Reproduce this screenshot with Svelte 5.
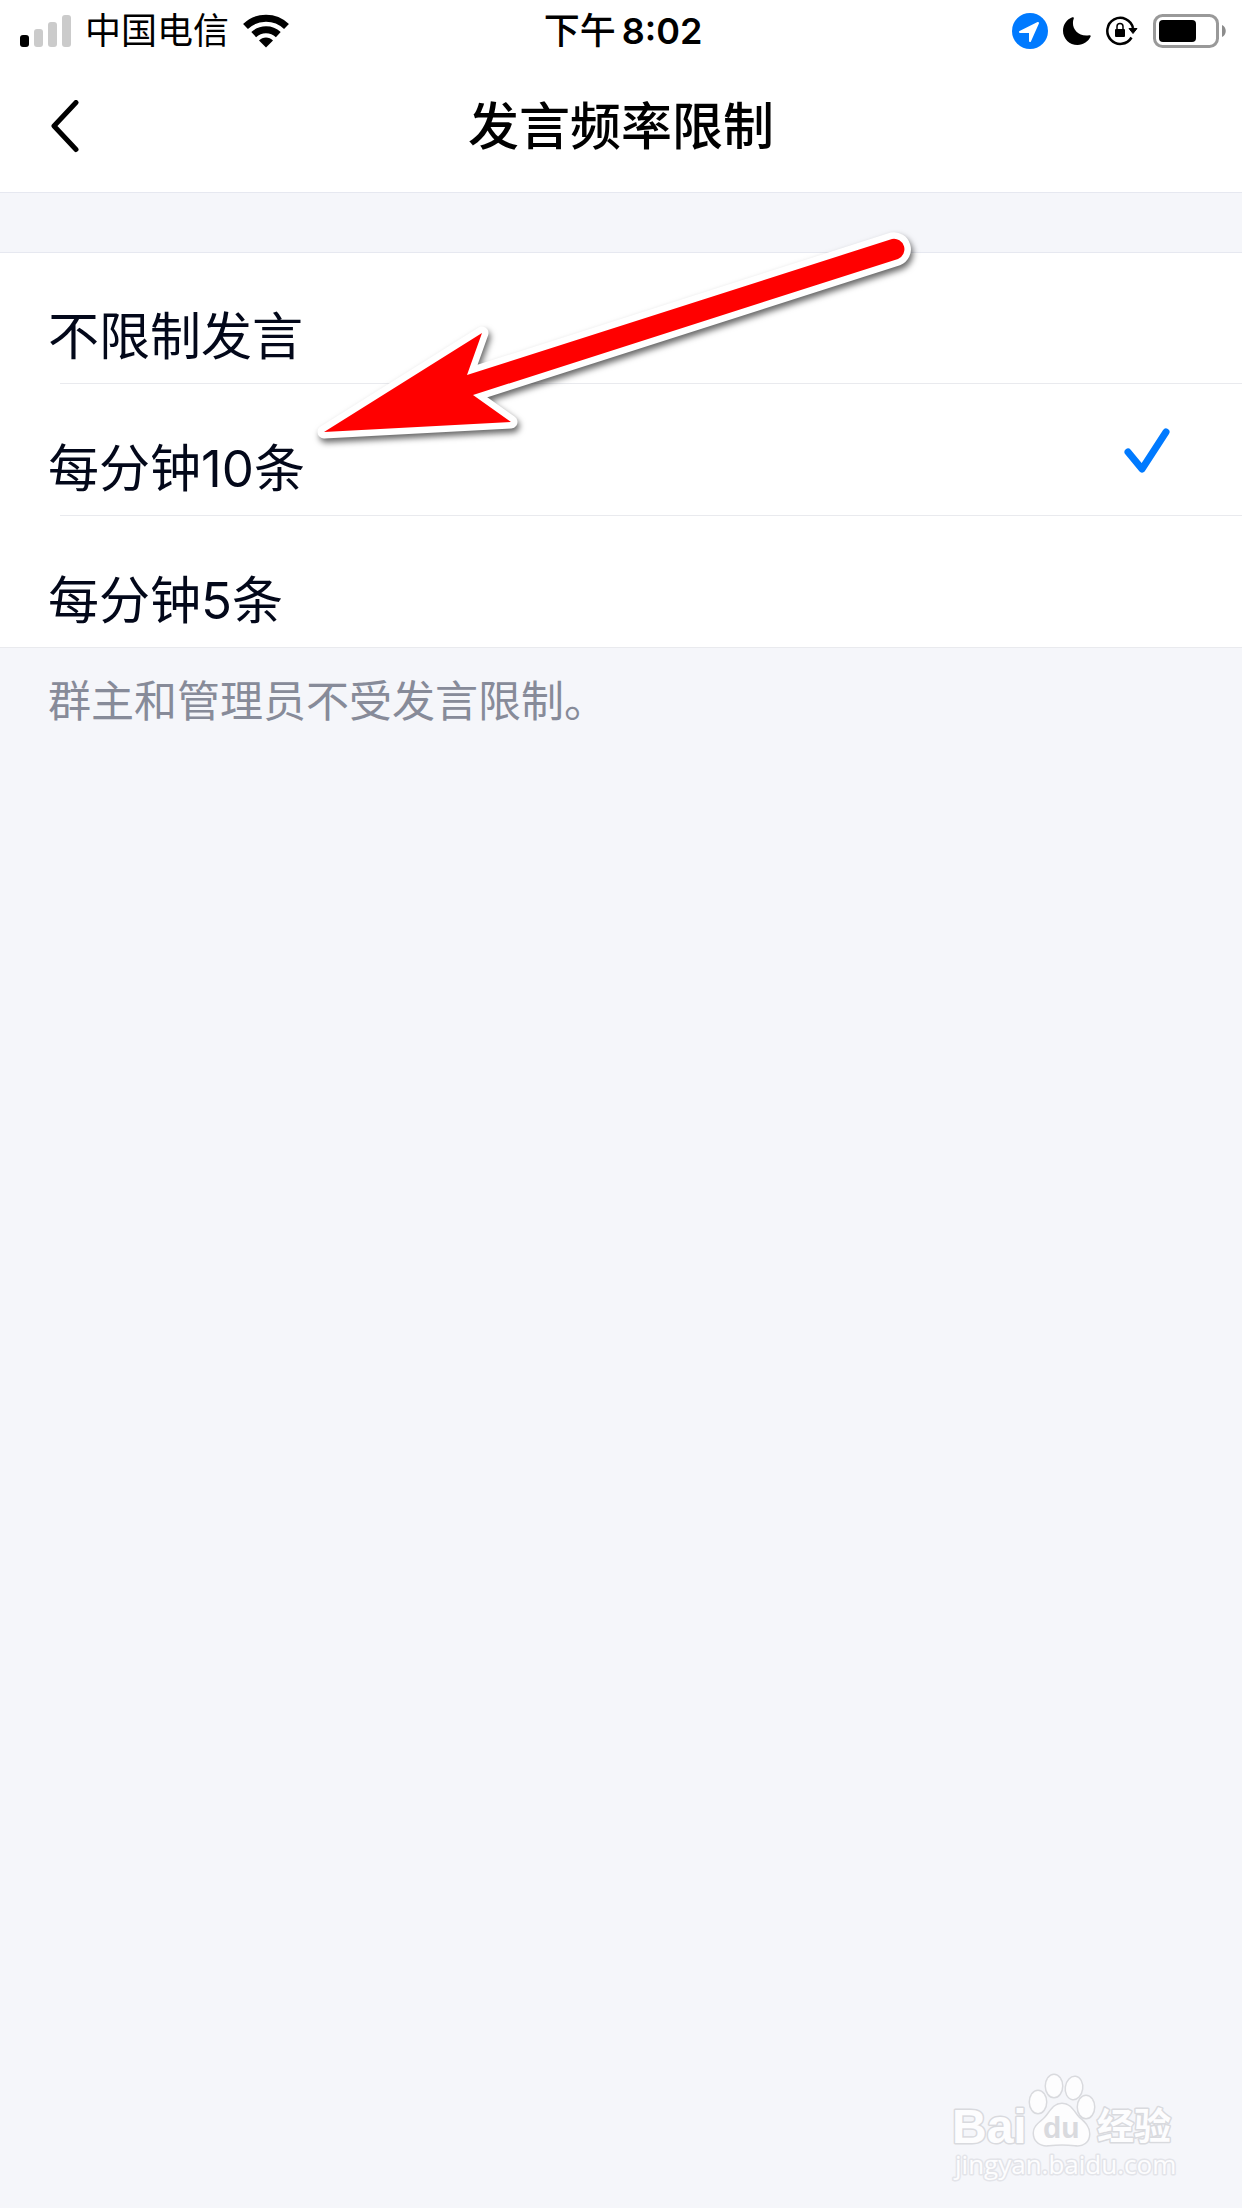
<script lang="ts">
    interface Option {
        value: string;
        label: string;
    }

    const options: Option[] = [
        { value: "unlimited", label: "不限制发言" },
        { value: "ten", label: "每分钟10条" },
        { value: "five", label: "每分钟5条" },
    ];

    let selected = $state("ten");
</script>

<div class="screen">
    <div class="status-bar">
        <div class="status-left">
            <svg class="icon" width="51" height="32" viewBox="0 0 51 32" aria-hidden="true">
                <rect x="0" y="20" width="9" height="12" rx="3" />
                <g fill="#cbcbcb">
                    <rect x="14" y="14" width="9" height="18" rx="3" />
                    <rect x="28" y="7" width="9" height="25" rx="3" />
                    <rect x="42" y="0" width="9" height="32" rx="3" />
                </g>
            </svg>
            <span class="carrier">中国电信</span>
            <svg class="icon" width="46" height="34" viewBox="0 0 46 34" aria-hidden="true">
                <g fill="none" stroke="#000" stroke-width="7">
                    <path d="M2.5 12.5a29.5 29.5 0 0 1 41 0" />
                    <path d="M10.7 20.6a18 18 0 0 1 24.6 0" />
                </g>
                <path d="M23 33.5l-7-7c3.8-4 10.2-4 14 0z" />
            </svg>
        </div>
        <div class="time">
            <span class="period">下午</span>
            <span>8:02</span>
        </div>
        <div class="status-right">
            <svg class="icon" width="36" height="36" viewBox="0 0 36 36" aria-hidden="true">
                <circle cx="18" cy="18" r="18" fill="#007aff" />
                <path
                    d="M8 19L26 10L18 28V19z"
                    fill="#fff"
                    stroke="#fff"
                    stroke-width="2"
                    stroke-linejoin="round"
                />
            </svg>
            <svg class="icon" width="28" height="28" viewBox="0 0 28 28" aria-hidden="true">
                <path
                    d="M9.3.3C10.5-.2 11.3.5 10.7 1.7C7.5 10 14.5 20.3 26.3 18.2C27.5 18 28 18.7 27.6 19.6C25.3 24.6 20.5 28 14.5 28C6.5 28 0 21.7 0 13.7C0 7.5 3.8 2.4 9.3.3z"
                />
            </svg>
            <svg class="icon" width="32" height="30" viewBox="0 0 32 30" aria-hidden="true">
                <path
                    d="M25.5 21.5A13 13 0 1 1 27 12"
                    fill="none"
                    stroke="#000"
                    stroke-width="2.5"
                />
                <path d="M23 12.5h8l-4 5z" stroke="#000" stroke-linejoin="round" />
                <rect x="9" y="13" width="10" height="8" rx="1" />
                <path d="M11 14v-3.5a3 3 0 0 1 6 0V14" fill="none" stroke="#000" stroke-width="1.5" />
            </svg>
            <svg class="icon" width="73" height="34" viewBox="0 0 73 34" aria-hidden="true">
                <rect
                    x="1.5"
                    y="1.5"
                    width="63"
                    height="31"
                    rx="8"
                    fill="none"
                    stroke="#999"
                    stroke-width="3"
                />
                <rect x="6" y="6" width="37" height="22" rx="4" />
                <path d="M69 11c5 2 5 10 0 12z" fill="#8c8c8c" />
            </svg>
        </div>
    </div>

    <header class="nav-bar">
        <button class="back" type="button" aria-label="返回">
            <svg width="30" height="54" viewBox="0 0 30 54" aria-hidden="true">
                <path
                    d="M26 2.5L4 26L26 49.5"
                    fill="none"
                    stroke="#000"
                    stroke-width="5"
                    stroke-linecap="round"
                    stroke-linejoin="round"
                />
            </svg>
        </button>
        <h1>发言频率限制</h1>
    </header>

    <main>
        <div class="options" role="radiogroup" aria-label="发言频率限制">
            {#each options as option (option.value)}
                <label class="option">
                    <input type="radio" name="limit" value={option.value} bind:group={selected} />
                    <span class="option-label">{option.label}</span>
                    {#if selected === option.value}
                        <svg class="check" width="46" height="46" viewBox="0 0 46 46" aria-hidden="true">
                            <path
                                d="M4 25L18 42L42 5"
                                fill="none"
                                stroke="#007aff"
                                stroke-width="7"
                                stroke-linecap="round"
                                stroke-linejoin="round"
                            />
                        </svg>
                    {/if}
                </label>
            {/each}
        </div>
        <p class="hint">群主和管理员不受发言限制。</p>
    </main>

    <!-- 指向选项的箭头 -->
    <svg class="pointer" width="620" height="220" viewBox="0 0 620 220" aria-hidden="true">
        <path d="M24 202L182 103L167 145L592 9A10.5 10.5 0 0 1 598 29L173 165L211 192z" />
    </svg>

    <!-- 水印 -->
    <svg class="watermark" width="240" height="116" viewBox="0 0 240 116" aria-hidden="true">
        <g class="mark">
            <ellipse cx="88" cy="32" rx="8" ry="11" />
            <ellipse cx="104" cy="16" rx="8" ry="11" />
            <ellipse cx="124" cy="18" rx="8" ry="11" transform="rotate(8 124 18)" />
            <ellipse cx="136" cy="37" rx="8" ry="11" />
            <path
                d="M112 34C121 34 124 43 129 48C135 53 139 57 139 64C139 72 133 76 125 75C116 74 108 74 99 75C90 76 84 71 84 63C84 56 90 53 95 48C100 43 103 34 112 34z"
            />
            <text class="bai" x="2" y="73">Bai</text>
            <text class="du" x="93" y="68">du</text>
            <text class="jingyan" x="147" y="70">经验</text>
            <text class="url" x="5" y="104">jingyan.baidu.com</text>
        </g>
    </svg>
</div>

<style>
    :global(body) {
        margin: 0;
        background: #f5f6fa;
    }

    .screen {
        position: relative;
        min-height: 100vh;
        overflow: hidden;
        background: #f5f6fa;
        color: #03081a;
        font-family: Inter, "Noto Sans CJK SC", sans-serif;
    }

    .icon {
        display: block;
        flex: none;
    }

    .status-bar {
        display: grid;
        grid-template-columns: 1fr auto 1fr;
        align-items: center;
        height: 62px;
        padding: 0 16px 0 20px;
        background: #fff;
        color: #000;
        font-size: 36px;
        line-height: 44px;
    }

    .status-left,
    .status-right {
        display: flex;
        align-items: center;
    }

    .status-left {
        gap: 14px;
    }

    .status-right {
        justify-content: flex-end;
        gap: 15px;
    }

    .time {
        display: flex;
        gap: 6px;
        font-weight: 600;
    }

    .period {
        font-weight: 500;
    }

    .nav-bar {
        display: grid;
        grid-template-columns: 1fr auto 1fr;
        align-items: center;
        height: 130px;
        padding: 0 50px;
        border-bottom: 1px solid #e6e8f0;
        background: #fff;
    }

    .back {
        display: flex;
        justify-self: start;
        padding: 0;
        border: 0;
        background: none;
        cursor: pointer;
    }

    h1 {
        margin: 0;
        color: #000;
        font-size: 51px;
        font-weight: 500;
        line-height: 60px;
    }

    .options {
        margin-top: 59px;
        background: #fff;
        box-shadow: inset 0 1px #e6e8f0;
    }

    .option {
        position: relative;
        display: flex;
        align-items: center;
        justify-content: space-between;
        height: 132px;
        padding: 0 72px 0 48px;
        cursor: pointer;
    }

    .option::after {
        content: "";
        position: absolute;
        right: 0;
        bottom: 0;
        left: 60px;
        height: 1px;
        background: #e9eaee;
    }

    .option:last-child::after {
        left: 0;
    }

    .option input {
        position: absolute;
        margin: 0;
        opacity: 0;
    }

    .option-label {
        padding-top: 38px;
        font-size: 51px;
        line-height: 60px;
    }

    .hint {
        margin: 0;
        padding: 27px 48px;
        color: #878b99;
        font-size: 43px;
        line-height: 52px;
    }

    .pointer {
        position: absolute;
        top: 230px;
        left: 300px;
        overflow: visible;
        pointer-events: none;
        filter: drop-shadow(2px 4px 3px rgba(0, 0, 0, 0.6));
    }

    .pointer path {
        fill: #f00;
        stroke: #fff;
        stroke-width: 13px;
        stroke-linejoin: round;
        paint-order: stroke;
    }

    .watermark {
        position: absolute;
        right: 52px;
        bottom: 22px;
    }

    .mark {
        fill: #fdfdfe;
        stroke: #d9dade;
        stroke-width: 3px;
        stroke-linejoin: round;
        paint-order: stroke;
    }

    .bai {
        font: bold 48px "Liberation Sans", sans-serif;
    }

    .du {
        fill: #d9dade;
        stroke: none;
        font: bold 30px "Liberation Sans", sans-serif;
    }

    .jingyan {
        font: bold 37px "Noto Sans CJK SC", sans-serif;
    }

    .url {
        stroke: #e3e4e9;
        font: 26px "Open Sans", sans-serif;
    }
</style>
